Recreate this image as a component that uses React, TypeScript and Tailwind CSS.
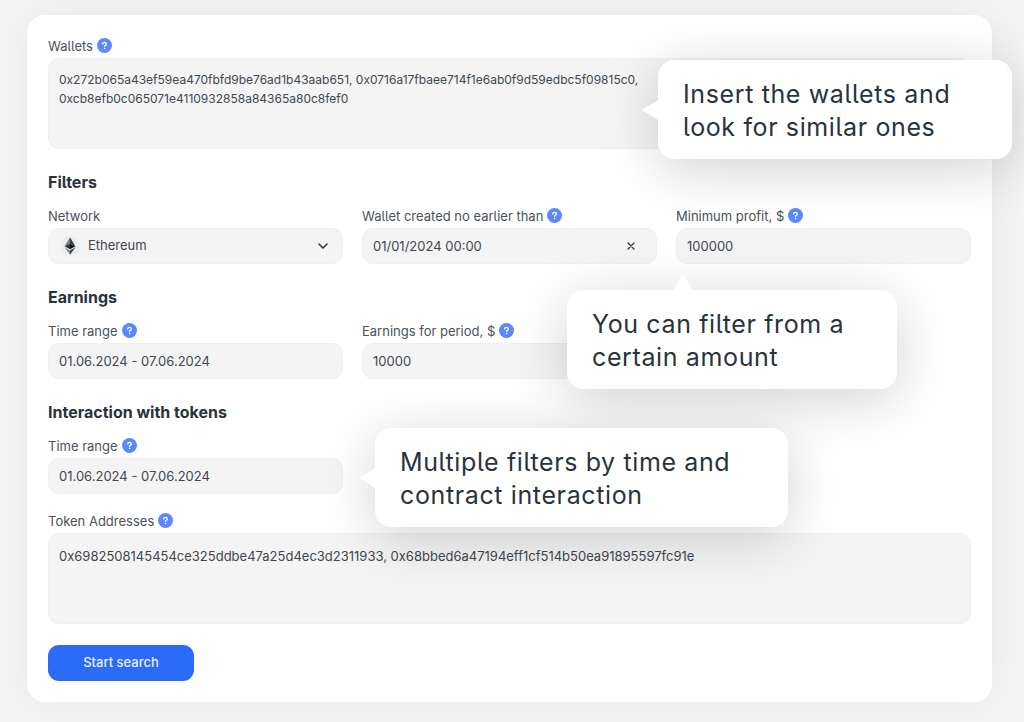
import { useState } from "react";
import type { ReactNode } from "react";

const fieldClass =
  "block h-9 w-full rounded-[11px] border border-[#efeff0] bg-[#f4f4f4] px-[10px] text-[13px] text-[#3f474f] outline-none focus-visible:border-[#5c88ff]";

const areaClass =
  "block h-[91px] w-full resize-none rounded-[11px] border border-[#efeff0] bg-[#f4f4f4] px-[10px] leading-[19px] text-[#3f474f] outline-none focus-visible:border-[#5c88ff]";

function HelpButton({ topic }: { topic: string }) {
  return (
    <button type="button" aria-label={`Help: ${topic}`} className="rounded-full">
      <svg viewBox="0 0 15 15" className="block h-[15px] w-[15px]" fill="none" aria-hidden="true">
        <circle cx="7.5" cy="7.5" r="7.5" fill="#5c88ff" />
        <path
          d="M5.7 6.1c0-1.1.8-1.8 1.85-1.8s1.8.65 1.8 1.6c0 1.3-1.75 1.3-1.75 2.5"
          stroke="#fff"
          strokeWidth="1.3"
          strokeLinecap="round"
        />
        <circle cx="7.6" cy="10.5" r="0.8" fill="#fff" />
      </svg>
    </button>
  );
}

function Field({
  id,
  label,
  help = true,
  children,
}: {
  id: string;
  label: string;
  help?: boolean;
  children: ReactNode;
}) {
  return (
    <div className="min-w-0">
      <div className="mb-[3px] flex h-5 items-center gap-1">
        <label htmlFor={id} className="pt-[2px] text-[13px] leading-[18px] text-[#4a525a]">
          {label}
        </label>
        {help ? <HelpButton topic={label} /> : null}
      </div>
      <div className="relative">{children}</div>
    </div>
  );
}

function SectionTitle({ children }: { children: ReactNode }) {
  return <h2 className="mt-[21px] mb-[11px] text-base leading-6 font-bold text-[#29333d]">{children}</h2>;
}

function Callout({
  pointer = "left",
  className,
  children,
}: {
  pointer?: "left" | "top";
  className: string;
  children: ReactNode;
}) {
  return (
    <div
      role="note"
      className={[
        "absolute z-10 rounded-2xl bg-white px-[25px] pt-[18px] pb-[15px] text-[25px] leading-[33px] tracking-wide text-[#29333d] shadow-[0_10px_56px_rgba(0,0,0,0.18)]",
        className,
      ].join(" ")}
    >
      {pointer === "left" ? (
        <svg viewBox="0 0 16 20" className="absolute top-1/2 right-full h-5 w-4 -translate-y-1/2" aria-hidden="true">
          <path d="M16 0v20L0 10z" fill="#fff" />
        </svg>
      ) : (
        <svg viewBox="0 0 20 16" className="absolute bottom-full left-[106px] h-4 w-5" aria-hidden="true">
          <path d="M0 16h20L10 0z" fill="#fff" />
        </svg>
      )}
      {children}
    </div>
  );
}

function EthereumIcon() {
  return (
    <svg
      viewBox="0 0 20 20"
      className="pointer-events-none absolute top-2 left-3 h-5 w-5"
      aria-hidden="true"
    >
      <circle cx="10" cy="10" r="10" fill="#ebeef0" />
      <path d="M10 1.2 4.6 10.2 10 7.8z" fill="#7c7f83" />
      <path d="M10 1.2v6.6l5.4 2.4z" fill="#3c3f44" />
      <path d="M4.6 10.2 10 13.3V7.8z" fill="#303338" />
      <path d="M15.4 10.2 10 13.3V7.8z" fill="#111418" />
      <path d="M4.6 11.3 10 18.8v-4.4z" fill="#85888c" />
      <path d="M15.4 11.3 10 18.8v-4.4z" fill="#3c3f44" />
    </svg>
  );
}

export default function App() {
  const [wallets, setWallets] = useState(
    "0x272b065a43ef59ea470fbfd9be76ad1b43aab651, 0x0716a17fbaee714f1e6ab0f9d59edbc5f09815c0,\n0xcb8efb0c065071e4110932858a84365a80c8fef0"
  );
  const [tokens, setTokens] = useState(
    "0x6982508145454ce325ddbe47a25d4ec3d2311933, 0x68bbed6a47194eff1cf514b50ea91895597fc91e"
  );
  const [network, setNetwork] = useState("ethereum");
  const [createdAfter, setCreatedAfter] = useState("01/01/2024 00:00");

  return (
    <main className="min-h-screen bg-[#f4f4f4] pt-[15px] pr-8 pb-5 pl-[27px] font-['Inter','Liberation_Sans',sans-serif] [font-feature-settings:'cv05']">
      <form
        onSubmit={(event) => event.preventDefault()}
        className="rounded-[18px] bg-white px-[21px] pt-5 pb-[21px] shadow-[0_0_40px_rgba(0,0,0,0.05)]"
      >
        <Field id="wallets" label="Wallets">
          <textarea
            id="wallets"
            spellCheck={false}
            value={wallets}
            onChange={(event) => setWallets(event.target.value)}
            className={`${areaClass} pt-[11px] text-xs`}
          />
          <Callout className="top-[2px] -right-[41px] w-[354px]">
            Insert the wallets and
            <br />
            look for similar ones
          </Callout>
        </Field>

        <SectionTitle>Filters</SectionTitle>
        <div className="grid grid-cols-3 gap-[19px]">
          <Field id="network" label="Network" help={false}>
            <select
              id="network"
              value={network}
              onChange={(event) => setNetwork(event.target.value)}
              className={`${fieldClass} appearance-none pl-[39px]`}
            >
              <option value="ethereum">Ethereum</option>
            </select>
            <EthereumIcon />
            <svg
              viewBox="0 0 10 6"
              fill="none"
              className="pointer-events-none absolute top-[15px] right-[15px] h-[6px] w-[10px]"
              aria-hidden="true"
            >
              <path d="m1 1 4 4 4-4" stroke="#343c44" strokeWidth="1.6" strokeLinecap="round" strokeLinejoin="round" />
            </svg>
          </Field>
          <Field id="created" label="Wallet created no earlier than">
            <input
              id="created"
              value={createdAfter}
              onChange={(event) => setCreatedAfter(event.target.value)}
              className={fieldClass}
            />
            <button
              type="button"
              aria-label="Clear date"
              onClick={() => setCreatedAfter("")}
              className="absolute top-[10px] right-[18px] flex h-4 w-4 items-center justify-center"
            >
              <svg viewBox="0 0 8 8" className="h-2 w-2" aria-hidden="true">
                <path d="m1 1 6 6M7 1 1 7" stroke="#343c44" strokeWidth="1.3" strokeLinecap="round" />
              </svg>
            </button>
          </Field>
          <Field id="profit" label="Minimum profit, $">
            <input id="profit" inputMode="numeric" defaultValue="100000" className={fieldClass} />
            <Callout pointer="top" className="top-[62px] -left-[109px] w-[330px]">
              You can filter from a
              <br />
              certain amount
            </Callout>
          </Field>
        </div>

        <SectionTitle>Earnings</SectionTitle>
        <div className="grid grid-cols-3 gap-[19px]">
          <Field id="earnings-range" label="Time range">
            <input id="earnings-range" defaultValue="01.06.2024 - 07.06.2024" className={fieldClass} />
          </Field>
          <Field id="earnings" label="Earnings for period, $">
            <input id="earnings" inputMode="numeric" defaultValue="10000" className={fieldClass} />
          </Field>
        </div>

        <SectionTitle>Interaction with tokens</SectionTitle>
        <div className="mb-4 grid grid-cols-3 gap-[19px]">
          <Field id="token-range" label="Time range">
            <input id="token-range" defaultValue="01.06.2024 - 07.06.2024" className={fieldClass} />
            <Callout className="-top-[30px] left-full ml-8 w-[413px]">
              Multiple filters by time and
              <br />
              contract interaction
            </Callout>
          </Field>
        </div>
        <Field id="tokens" label="Token Addresses">
          <textarea
            id="tokens"
            spellCheck={false}
            value={tokens}
            onChange={(event) => setTokens(event.target.value)}
            className={`${areaClass} pt-[13px] text-[13px]`}
          />
        </Field>

        <button
          type="submit"
          className="mt-[21px] h-9 w-[146px] rounded-[11px] bg-[#2c6bf7] text-[13px] font-medium text-[#e9f0ff] hover:bg-[#1f5ce4]"
        >
          Start search
        </button>
      </form>
    </main>
  );
}
